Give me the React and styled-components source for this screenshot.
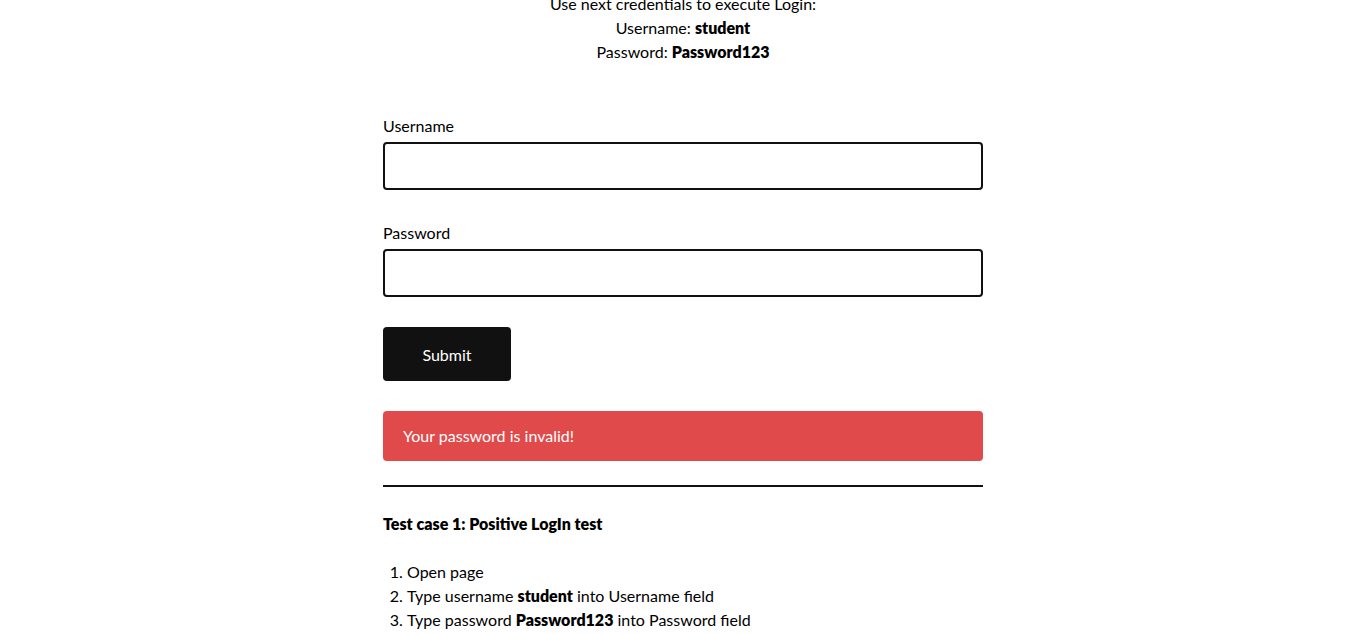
import React from 'react';
import styled, { createGlobalStyle } from 'styled-components';

const GlobalStyle = createGlobalStyle`
  body {
    margin: 0;
    background: #ffffff;
    color: #000000;
    font-family: Lato, "Open Sans", sans-serif;
    font-size: 16px;
    line-height: 24px;
  }
`;

const Page = styled.main`
  width: 600px;
  margin: -8px auto 0;
`;

const Intro = styled.div`
  text-align: center;
  margin-bottom: 50px;
`;

const Strong = styled.strong`
  font-weight: 800;
`;

const Field = styled.div`
  display: flex;
  flex-direction: column;
  gap: 4px;
  margin-bottom: ${(p) => p.$gap}px;
`;

const Label = styled.label`
  font-size: 16px;
  line-height: 24px;
`;

const Input = styled.input`
  box-sizing: border-box;
  height: 48px;
  width: 100%;
  border: 2px solid #111111;
  border-radius: 4px;
  padding: 0 12px;
  font: inherit;
  outline: none;
`;

const Button = styled.button`
  display: block;
  width: 128px;
  height: 54px;
  border: none;
  border-radius: 4px;
  background: #111111;
  color: #ffffff;
  font-family: Lato, sans-serif;
  font-size: 16px;
  margin-bottom: 30px;
`;

const ErrorBox = styled.div`
  box-sizing: border-box;
  height: 50px;
  display: flex;
  align-items: center;
  padding: 0 20px;
  border-radius: 4px;
  background: #e14a4a;
  color: #ffffff;
  margin-bottom: 24px;
`;

const Rule = styled.hr`
  border: none;
  border-top: 2px solid #111111;
  margin: 0 0 25px;
`;

const Heading = styled.h4`
  font-size: 16px;
  font-weight: 800;
  line-height: 24px;
  margin: 0 0 24px;
`;

const Steps = styled.ol`
  margin: 0;
  padding-left: 24px;
`;

export default function App() {
  return (
    <>
      <GlobalStyle />
      <Page>
        <Intro>
          Use next credentials to execute Login:
          <br />
          Username: <Strong>student</Strong>
          <br />
          Password: <Strong>Password123</Strong>
        </Intro>
        <Field $gap={31}>
          <Label htmlFor="username">Username</Label>
          <Input id="username" type="text" />
        </Field>
        <Field $gap={30}>
          <Label htmlFor="password">Password</Label>
          <Input id="password" type="password" />
        </Field>
        <Button>Submit</Button>
        <ErrorBox>Your password is invalid!</ErrorBox>
        <Rule />
        <Heading>Test case 1: Positive LogIn test</Heading>
        <Steps>
          <li>Open page</li>
          <li>
            Type username <Strong>student</Strong> into Username field
          </li>
          <li>
            Type password <Strong>Password123</Strong> into Password field
          </li>
        </Steps>
      </Page>
    </>
  );
}
